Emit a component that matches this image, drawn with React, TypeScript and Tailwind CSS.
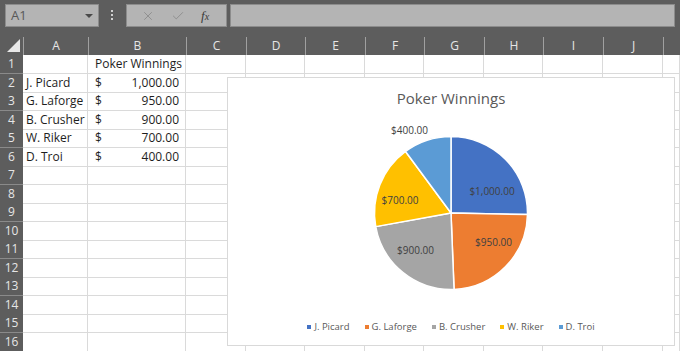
import { Check, X } from 'lucide-react';

const cols = ['A', 'B', 'C', 'D', 'E', 'F', 'G', 'H', 'I', 'J', ''];

const rows: { name?: string; amount?: string; title?: string }[] = [
  { title: 'Poker Winnings' },
  { name: 'J. Picard', amount: '1,000.00' },
  { name: 'G. Laforge', amount: '950.00' },
  { name: 'B. Crusher', amount: '900.00' },
  { name: 'W. Riker', amount: '700.00' },
  { name: 'D. Troi', amount: '400.00' },
  ...Array.from({ length: 10 }, () => ({})),
];

const slices = [
  { label: 'J. Picard', value: 1000, color: '#4472c4', text: '$1,000.00', x: 141, y: 74 },
  { label: 'G. Laforge', value: 950, color: '#ed7d31', text: '$950.00', x: 142.5, y: 125 },
  { label: 'B. Crusher', value: 900, color: '#a5a5a5', text: '$900.00', x: 64.5, y: 133 },
  { label: 'W. Riker', value: 700, color: '#ffc000', text: '$700.00', x: 49, y: 83 },
  { label: 'D. Troi', value: 400, color: '#5b9bd5', text: '$400.00', x: 58.5, y: 13 },
];

const grid = 'grid grid-cols-[23px_65px_98px_60px_59px_60px_59px_60px_59px_60px_60px_1fr]';

function PieChart() {
  const total = slices.reduce((s, d) => s + d.value, 0);
  const cx = 100;
  const cy = 96;
  const r = 76.5;
  let acc = 0;
  const pt = (a: number) => {
    const rad = (a - 90) * (Math.PI / 180);
    return [cx + r * Math.cos(rad), cy + r * Math.sin(rad)];
  };
  return (
    <svg width="200" height="200" viewBox="0 0 200 200">
      {slices.map((s) => {
        const a0 = (acc / total) * 360;
        acc += s.value;
        const a1 = (acc / total) * 360;
        const [x0, y0] = pt(a0);
        const [x1, y1] = pt(a1);
        const large = a1 - a0 > 180 ? 1 : 0;
        return (
          <path
            key={s.label}
            d={`M${cx},${cy} L${x0},${y0} A${r},${r} 0 ${large} 1 ${x1},${y1} Z`}
            fill={s.color}
            stroke="#fff"
            strokeWidth="1.5"
            strokeLinejoin="round"
          />
        );
      })}
      {slices.map((s) => (
        <text
          key={s.text}
          x={s.x}
          y={s.y}
          textAnchor="middle"
          dominantBaseline="central"
          fontSize="10"
          fill="#404040"
        >
          {s.text}
        </text>
      ))}
    </svg>
  );
}

export default function App() {
  return (
    <div className="relative w-[680px] h-[351px] overflow-hidden bg-white font-['Open_Sans',sans-serif]">
      {/* formula bar */}
      <div className="flex items-start h-[35px] bg-[#5d5d5d] pt-[4px] pl-[5px] pr-[5px]">
        <div className="flex items-center justify-between w-[94px] h-[23px] bg-[#b4b4b4] border border-[#8c8c8c] pl-[5px] pr-[5px] text-[13px] text-[#585858]">
          <span>A1</span>
          <span className="w-0 h-0 border-l-[4px] border-r-[4px] border-t-[4px] border-l-transparent border-r-transparent border-t-[#4a4a4a]" />
        </div>
        <div className="flex flex-col gap-[2px] ml-[12px] mr-[13px] mt-[6px]">
          <span className="w-[2px] h-[2px] bg-[#d0d0d0]" />
          <span className="w-[2px] h-[2px] bg-[#d0d0d0]" />
          <span className="w-[2px] h-[2px] bg-[#d0d0d0]" />
        </div>
        <div className="flex items-center w-[101px] h-[23px] bg-[#b4b4b4] border border-[#8c8c8c] text-[#8a8a8a]">
          <X size={14} strokeWidth={1.5} className="ml-[14px]" />
          <Check size={14} strokeWidth={1.5} className="ml-[16px]" />
          <span className="ml-[16px] text-[13px] italic text-[#3a3a3a] font-['Liberation_Serif',serif]">
            f<span className="text-[10px]">x</span>
          </span>
        </div>
        <div className="flex-1 ml-[3px] h-[23px] bg-[#b4b4b4] border border-[#8c8c8c]" />
      </div>

      {/* column headers */}
      <div className={`${grid} h-[20px] bg-[#5d5d5d] text-[12px] text-[#e6e6e6]`}>
        <div className="relative">
          <span className="absolute right-[3px] bottom-[3px] w-0 h-0 [border-bottom:13px_solid_#e8e8e8] [border-left:13px_solid_transparent]" />
        </div>
        {cols.map((c, i) => (
          <div key={i} className="flex items-center justify-center border-l border-[#a0a0a0] mt-[2px]">
            {c}
          </div>
        ))}
      </div>

      {/* rows */}
      {rows.map((r, i) => (
        <div key={i} className={`${grid} h-[18.5px] text-[12px] text-[#1e1e1e]`}>
          <div className="flex items-center justify-center bg-[#5d5d5d] text-[12px] text-[#e6e6e6] border-b border-[#8a8a8a]">
            {i + 1}
          </div>
          <div className="flex items-center pl-[3px] border-r border-b border-[#dadada] whitespace-nowrap">
            {r.name}
          </div>
          <div className="flex items-center justify-between pl-[7px] pr-[6px] border-r border-b border-[#dadada] whitespace-nowrap">
            {r.title ? <span>{r.title}</span> : r.amount ? (<><span>$</span><span>{r.amount}</span></>) : null}
          </div>
          {cols.slice(2).map((c, j) => (
            <div key={j} className="border-r border-b border-[#dadada]" />
          ))}
        </div>
      ))}

      {/* chart overlay */}
      <div className="absolute left-[227px] top-[77px] w-[448px] h-[269px] bg-white border border-[#d9d9d9] flex flex-col items-center">
        <div className="mt-[10px] h-[20px] leading-[20px] text-[15px] text-[#595959]">Poker Winnings</div>
        <div className="mt-[9px]">
          <PieChart />
        </div>
        <div className="mt-[2px] flex items-center gap-[15px] text-[9.5px] text-[#595959] leading-[16px]">
          {slices.map((s) => (
            <div key={s.label} className="flex items-center gap-[3px]">
              <span className="w-[4px] h-[4px]" style={{ backgroundColor: s.color }} />
              <span>{s.label}</span>
            </div>
          ))}
        </div>
      </div>
    </div>
  );
}
